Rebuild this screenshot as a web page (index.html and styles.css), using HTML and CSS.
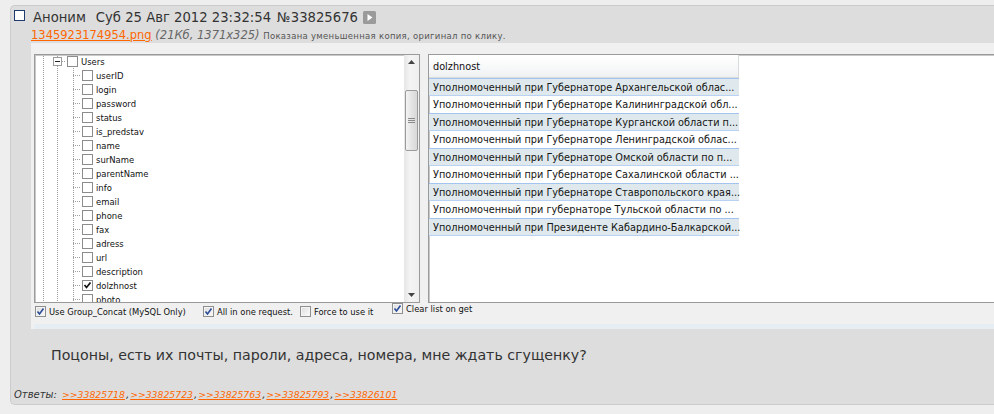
FILE: index.html
```html
<!DOCTYPE html>
<html lang="ru">
<head>
<meta charset="utf-8">
<title>Аноним №33825676</title>
<link rel="stylesheet" href="styles.css">
</head>
<body>
<div class="post">
  <div class="post-head">
    <span class="sel-box"></span>
    <span class="author">Аноним</span>
    <span class="date">Суб 25 Авг 2012 23:32:54</span>
    <span class="num">№33825676</span>
    <span class="play"><svg width="13" height="13" viewBox="0 0 13 13"><rect x="0" y="0" width="13" height="13" rx="1.5" fill="#9a9a9a"/><path d="M4.5 3 L9.5 6.5 L4.5 10 Z" fill="#fff"/></svg></span>
  </div>
  <div class="file-info"><a class="file-link" href="#">1345923174954.png</a> <em class="file-meta">(21Кб, 1371x325)</em> <span class="file-note">Показана уменьшенная копия, оригинал по клику.</span></div>

  <div class="shot">
    <div class="panels">
      <div class="tree">
        <div class="tree-list">
          <div class="node root"><span class="g g1"></span><span class="g g2 gx"><span class="expander"></span></span><span class="cb"></span><span class="lbl">Users</span></div>
          <div class="node"><span class="g g1"></span><span class="g g2"></span><span class="g g3"></span><span class="cb"></span><span class="lbl">userID</span></div>
          <div class="node"><span class="g g1"></span><span class="g g2"></span><span class="g g3"></span><span class="cb"></span><span class="lbl">login</span></div>
          <div class="node"><span class="g g1"></span><span class="g g2"></span><span class="g g3"></span><span class="cb"></span><span class="lbl">password</span></div>
          <div class="node"><span class="g g1"></span><span class="g g2"></span><span class="g g3"></span><span class="cb"></span><span class="lbl">status</span></div>
          <div class="node"><span class="g g1"></span><span class="g g2"></span><span class="g g3"></span><span class="cb"></span><span class="lbl">is_predstav</span></div>
          <div class="node"><span class="g g1"></span><span class="g g2"></span><span class="g g3"></span><span class="cb"></span><span class="lbl">name</span></div>
          <div class="node"><span class="g g1"></span><span class="g g2"></span><span class="g g3"></span><span class="cb"></span><span class="lbl">surName</span></div>
          <div class="node"><span class="g g1"></span><span class="g g2"></span><span class="g g3"></span><span class="cb"></span><span class="lbl">parentName</span></div>
          <div class="node"><span class="g g1"></span><span class="g g2"></span><span class="g g3"></span><span class="cb"></span><span class="lbl">info</span></div>
          <div class="node"><span class="g g1"></span><span class="g g2"></span><span class="g g3"></span><span class="cb"></span><span class="lbl">email</span></div>
          <div class="node"><span class="g g1"></span><span class="g g2"></span><span class="g g3"></span><span class="cb"></span><span class="lbl">phone</span></div>
          <div class="node"><span class="g g1"></span><span class="g g2"></span><span class="g g3"></span><span class="cb"></span><span class="lbl">fax</span></div>
          <div class="node"><span class="g g1"></span><span class="g g2"></span><span class="g g3"></span><span class="cb"></span><span class="lbl">adress</span></div>
          <div class="node"><span class="g g1"></span><span class="g g2"></span><span class="g g3"></span><span class="cb"></span><span class="lbl">url</span></div>
          <div class="node"><span class="g g1"></span><span class="g g2"></span><span class="g g3"></span><span class="cb"></span><span class="lbl">description</span></div>
          <div class="node"><span class="g g1"></span><span class="g g2"></span><span class="g g3"></span><span class="cb checked"><svg width="9" height="9" viewBox="0 0 9 9"><path d="M1.5 4 L3.5 6.5 L7.5 1.5" fill="none" stroke="#111" stroke-width="1.7"/></svg></span><span class="lbl">dolzhnost</span></div>
          <div class="node"><span class="g g1"></span><span class="g g2"></span><span class="g g3"></span><span class="cb"></span><span class="lbl">photo</span></div>
        </div>
        <div class="vscroll">
          <span class="arrow"><svg width="7" height="4" viewBox="0 0 7 4"><path d="M0 4 L3.5 0 L7 4 Z" fill="#444"/></svg></span>
          <span class="track-top"></span>
          <span class="thumb"><svg width="7" height="6" viewBox="0 0 7 6"><path d="M0 0.5 H7 M0 2.5 H7 M0 4.5 H7" stroke="#8a8a8a" stroke-width="1"/></svg></span>
          <span class="track-bottom"></span>
          <span class="arrow"><svg width="7" height="4" viewBox="0 0 7 4"><path d="M0 0 L3.5 4 L7 0 Z" fill="#444"/></svg></span>
        </div>
      </div>

      <div class="grid">
        <div class="grid-head"><span class="col-head">dolzhnost</span></div>
        <div class="row hl">Уполномоченный при Губернаторе Архангельской облас...</div>
        <div class="row">Уполномоченный при Губернаторе Калининградской обл...</div>
        <div class="row hl">Уполномоченный при Губернаторе Курганской области п...</div>
        <div class="row">Уполномоченный при Губернаторе Ленинградской облас...</div>
        <div class="row hl">Уполномоченный при Губернаторе Омской области по п...</div>
        <div class="row">Уполномоченный при Губернаторе Сахалинской области ...</div>
        <div class="row hl">Уполномоченный при Губернаторе Ставропольского края...</div>
        <div class="row">Уполномоченный при губернаторе Тульской области по ...</div>
        <div class="row hl">Уполномоченный при Президенте Кабардино-Балкарской...</div>
      </div>
    </div>

    <div class="options">
      <label class="opt"><span class="wcb"><svg width="9" height="9" viewBox="0 0 9 9"><path d="M1.5 4.5 L3.5 7 L7.5 1.5" fill="none" stroke="#2b4c98" stroke-width="1.6"/></svg></span>Use Group_Concat (MySQL Only)</label>
      <label class="opt"><span class="wcb"><svg width="9" height="9" viewBox="0 0 9 9"><path d="M1.5 4.5 L3.5 7 L7.5 1.5" fill="none" stroke="#2b4c98" stroke-width="1.6"/></svg></span>All in one request.</label>
      <label class="opt"><span class="wcb"></span>Force to use it</label>
      <label class="opt up"><span class="wcb"><svg width="9" height="9" viewBox="0 0 9 9"><path d="M1.5 4.5 L3.5 7 L7.5 1.5" fill="none" stroke="#2b4c98" stroke-width="1.6"/></svg></span>Clear list on get</label>
    </div>
    <div class="status-band"></div>
  </div>

  <div class="message">Поцоны, есть их почты, пароли, адреса, номера, мне ждать сгущенку?</div>
  <div class="replies"><em class="replies-title">Ответы:</em> <a href="#">&gt;&gt;33825718</a>,<a href="#">&gt;&gt;33825723</a>,<a href="#">&gt;&gt;33825763</a>,<a href="#">&gt;&gt;33825793</a>,<a href="#">&gt;&gt;33826101</a></div>
</div>
</body>
</html>
```

FILE: styles.css
```css
html, body {
  margin: 0;
  padding: 0;
}
body {
  background: #eeeeee;
  font-family: "DejaVu Sans", Verdana, sans-serif;
  color: #333;
  overflow: hidden;
  width: 994px;
  height: 414px;
}

.post {
  margin: 5px 0 0 10px;
  height: 400px;
  box-sizing: border-box;
  background: #dddddd;
  border: 1px solid #cccccc;
  border-right: 0;
  border-radius: 5px 0 0 5px;
}

/* ---- header ---- */
.post-head {
  display: flex;
  align-items: flex-start;
  margin-top: 3px;
  height: 18px;
  line-height: 18px;
  font-size: 13.2px;
  color: #333;
  white-space: nowrap;
}
.sel-box {
  width: 11px;
  height: 11px;
  box-sizing: border-box;
  margin: 1px 0 0 3px;
  border: 1px solid #1e3d6e;
  background: #fff;
  flex: none;
}
.author { margin-left: 8px; }
.date { margin-left: 10px; }
.num { margin-left: 6px; }
.play {
  margin: 2px 0 0 5px;
  display: flex;
  width: 13px;
  height: 13px;
}

.file-info {
  margin: 1px 0 0 20px;
  height: 15px;
  line-height: 15px;
  font-size: 11.5px;
  white-space: nowrap;
  color: #666;
}
.file-link {
  color: #ff6600;
  text-decoration: underline;
}
.file-meta {
  color: #666;
}
.file-note {
  font-size: 8.5px;
  letter-spacing: 0.3px;
  color: #555;
}

/* ---- embedded screenshot ---- */
.shot {
  margin: 0 0 0 20px;
  height: 286px;
  background: #f0f0f0;
  overflow: hidden;
  display: flex;
  flex-direction: column;
  padding: 11px 0 0 3px;
  box-sizing: border-box;
  font-family: "DejaVu Sans Condensed", "DejaVu Sans", sans-serif;
  font-stretch: condensed;
  color: #111;
}
.panels {
  display: flex;
  gap: 8px;
  height: 249px;
  flex: none;
}

.tree {
  width: 386px;
  flex: none;
  box-sizing: border-box;
  border: 1px solid #9a9a9a;
  box-shadow: inset 1px 1px 0 #c8c8c8;
  background: #fff;
  display: flex;
  overflow: hidden;
}
.tree-list {
  flex: 1;
  margin-top: -1px;
  overflow: hidden;
}
.node {
  display: flex;
  align-items: center;
  height: 14px;
  font-size: 9.4px;
  white-space: nowrap;
}
.g {
  flex: none;
  width: 15px;
  height: 14px;
  display: flex;
  align-items: center;
  background-image: repeating-linear-gradient(to bottom, #a0a0a0 0 1px, transparent 1px 2px);
  background-size: 1px 100%;
  background-repeat: no-repeat;
  background-position: 8px 0;
}
.g2 { background-position: 7px 0; }
.g3 {
  width: 16px;
  background-image:
    repeating-linear-gradient(to bottom, #a0a0a0 0 1px, transparent 1px 2px),
    repeating-linear-gradient(to right, #a0a0a0 0 1px, transparent 1px 2px);
  background-size: 1px 100%, 8px 1px;
  background-position: 8px 0, 8px 7px;
}
.gx {
  background-image:
    repeating-linear-gradient(to bottom, #a0a0a0 0 1px, transparent 1px 2px),
    repeating-linear-gradient(to right, #a0a0a0 0 1px, transparent 1px 2px);
  background-size: 1px 100%, 8px 1px;
  background-position: 7px 0, 8px 7px;
}
.expander {
  width: 9px;
  height: 9px;
  box-sizing: border-box;
  margin-left: 3px;
  border: 1px solid #9c9c9c;
  background: #fff linear-gradient(#222, #222) center / 5px 1px no-repeat;
}
.cb {
  flex: none;
  width: 11px;
  height: 11px;
  box-sizing: border-box;
  margin-left: 1px;
  border: 1px solid #8c8c8c;
  background: #fff;
  display: flex;
  align-items: center;
  justify-content: center;
}
.root .cb { margin-left: 2px; }
.lbl {
  margin-left: 3px;
  color: #111;
}

.vscroll {
  width: 15px;
  flex: none;
  background: linear-gradient(to right, #e6e6e6, #f4f4f4 40%, #efefef);
  display: flex;
  flex-direction: column;
  align-items: center;
}
.arrow {
  height: 14px;
  display: flex;
  align-items: center;
  justify-content: center;
  flex: none;
}
.track-top { height: 21px; flex: none; }
.thumb {
  width: 13px;
  height: 61px;
  box-sizing: border-box;
  border: 1px solid #9b9b9b;
  border-radius: 2px;
  background: linear-gradient(to right, #f4f4f4, #e4e4e4 50%, #d8d8d8);
  display: flex;
  align-items: center;
  justify-content: center;
  flex: none;
}
.track-bottom { flex: 1; }

.grid {
  flex: 1;
  min-width: 0;
  box-sizing: border-box;
  border: 1px solid #9a9a9a;
  border-right: 0;
  box-shadow: inset 1px 1px 0 #c8c8c8;
  background: #fff;
  font-size: 10.8px;
  white-space: nowrap;
  overflow: hidden;
}
.grid-head {
  height: 23px;
  display: flex;
}
.col-head {
  width: 310px;
  box-sizing: border-box;
  padding-left: 4px;
  display: flex;
  align-items: center;
  background: linear-gradient(#ffffff, #f7f8f9 60%, #eef0f2);
  border-right: 1px solid #d8dadc;
  border-bottom: 1px solid #d8dadc;
  color: #111;
}
.row {
  width: 310px;
  height: 17px;
  box-sizing: border-box;
  padding-left: 4px;
  display: flex;
  align-items: center;
  color: #151515;
}
.row.hl {
  height: 18px;
  background: #dfe9ed;
  border-top: 1px solid #a3c4ef;
  border-bottom: 1px solid #b9d2f3;
}

.options {
  display: grid;
  grid-template-columns: 168px 97px 92px auto;
  align-items: center;
  height: 17px;
  padding-left: 1px;
  font-size: 9.3px;
  color: #111;
  flex: none;
}
.opt {
  display: flex;
  align-items: center;
  gap: 3px;
  white-space: nowrap;
}
.opt.up { margin-bottom: 6px; }
.wcb {
  flex: none;
  width: 11px;
  height: 11px;
  box-sizing: border-box;
  border: 1px solid #8e8f8f;
  background: linear-gradient(135deg, #dcdcdc, #fbfbfb);
  box-shadow: inset 0 0 0 1px #f4f4f4;
  display: flex;
  align-items: center;
  justify-content: center;
}
.status-band {
  margin-top: auto;
  height: 5px;
  background: #e6edf3;
  flex: none;
}

/* ---- message ---- */
.message {
  margin: 16px 0 0 40px;
  font-size: 14.2px;
  line-height: 20px;
  color: #333;
  white-space: nowrap;
}
.replies {
  margin: 23px 0 0 3px;
  font-size: 10px;
  line-height: 14px;
  font-style: italic;
  color: #333;
  white-space: nowrap;
}
.replies a {
  font-size: 9.3px;
  color: #ff6600;
  text-decoration: underline;
  margin-right: 1px;
}
.replies a + a { margin-left: 1px; }
.replies-title { margin-right: 2px; }
```
